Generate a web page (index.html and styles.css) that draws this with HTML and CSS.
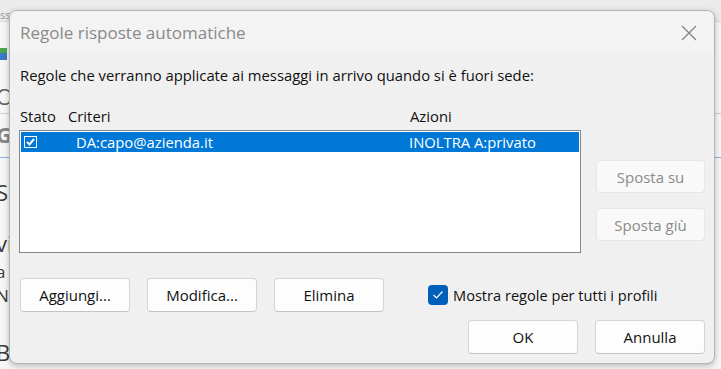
FILE: index.html
```html
<!DOCTYPE html>
<html lang="it">

<head>
    <meta charset="UTF-8">
    <title>Regole risposte automatiche</title>
    <link rel="stylesheet" href="styles.css">
</head>

<body>

    <div class="sfondo">
        <div class="sfondo-top">ss</div>
        <div class="sfondo-icona"></div>
        <div class="sfondo-riga r-o">O</div>
        <div class="sfondo-riga r-g">G</div>
        <div class="sfondo-linea"></div>
        <div class="sfondo-riga r-se">Se</div>
        <div class="sfondo-riga r-vi">vi</div>
        <div class="sfondo-riga r-a">a</div>
        <div class="sfondo-riga r-n">N</div>
        <div class="sfondo-riga r-b">B</div>
    </div>

    <div class="finestra">
        <div class="barra-titolo">
            <span class="titolo">Regole risposte automatiche</span>
            <svg class="chiudi" width="16" height="16" viewBox="0 0 16 16">
                <path d="M1 1 L15 15 M15 1 L1 15" stroke="#808080" stroke-width="1.2" fill="none" />
            </svg>
        </div>

        <div class="contenuto">
            <p class="intro">Regole che verranno applicate ai messaggi in arrivo quando si è fuori sede:</p>

            <div class="principale">
                <div class="regole">
                    <div class="intestazioni">
                        <span class="col-stato">Stato</span>
                        <span class="col-criteri">Criteri</span>
                        <span class="col-azioni">Azioni</span>
                    </div>
                    <div class="lista">
                        <div class="riga selezionata">
                            <span class="col-stato"><span class="spunta-classica">
                                <svg width="9" height="8" viewBox="0 0 9 8">
                                    <path d="M1 4 L3.5 6.5 L8 1" stroke="#fff" stroke-width="2" fill="none" />
                                </svg>
                            </span></span>
                            <span class="col-criteri">DA:capo@azienda.it</span>
                            <span class="col-azioni">INOLTRA A:privato</span>
                        </div>
                    </div>
                </div>

                <div class="laterale">
                    <button class="pulsante" disabled>Sposta su</button>
                    <button class="pulsante" disabled>Sposta giù</button>
                </div>
            </div>

            <div class="azioni">
                <button class="pulsante">Aggiungi...</button>
                <button class="pulsante">Modifica...</button>
                <button class="pulsante">Elimina</button>
                <label class="opzione">
                    <span class="casella">
                        <svg width="12" height="10" viewBox="0 0 12 10">
                            <path d="M1.5 5 L4.5 8 L10.5 1.5" stroke="#fff" stroke-width="1.2" fill="none" />
                        </svg>
                    </span>
                    Mostra regole per tutti i profili
                </label>
            </div>

            <div class="piede">
                <button class="pulsante">OK</button>
                <button class="pulsante">Annulla</button>
            </div>
        </div>
    </div>

</body>

</html>
```

FILE: styles.css
```css
html {
    background-color: #ececec;
}

body {
    margin: 0;
    width: 721px;
    height: 369px;
    position: relative;
    overflow: hidden;
    font-family: 'Open Sans', 'Noto Sans', sans-serif;
}

/* finestra di Outlook dietro al dialogo */
.sfondo {
    display: flex;
    flex-direction: column;
    height: 100%;
    background-color: #f7f7f7;
    color: #3a3a3a;
    font-size: 22px;
}

.sfondo-top {
    height: 22px;
    font-size: 11px;
    line-height: 14px;
    color: #999;
    background-color: #ebebeb;
    border-bottom: 1px solid #ddd;
    padding-top: 8px;
    box-sizing: border-box;
}

.sfondo-icona {
    margin-top: 26px;
    width: 7px;
    height: 12px;
    background: linear-gradient(#4aa64a 0 40%, #3c78c8 40%);
}

.sfondo-riga {
    text-indent: -4px;
}

.r-o {
    margin-top: 19px;
    height: 34px;
    line-height: 34px;
    border-bottom: 1px solid #cfcfcf;
    color: #666;
}

.r-g {
    height: 40px;
    line-height: 40px;
    color: #888;
    font-weight: bold;
}

.sfondo-linea {
    height: 1px;
    margin-top: 3px;
    background-color: #8ab4e8;
}

.r-se {
    height: 68px;
    line-height: 68px;
}

.r-vi {
    height: 34px;
    line-height: 34px;
}

.r-a {
    height: 24px;
    line-height: 24px;
    font-size: 17px;
}

.r-n {
    height: 24px;
    line-height: 24px;
    font-size: 17px;
}

.r-b {
    margin-top: 29px;
    height: 30px;
    line-height: 30px;
}

/* dialogo */
.finestra {
    position: absolute;
    left: 9px;
    top: 10px;
    width: 706px;
    height: 354px;
    box-sizing: border-box;
    background-color: #f0f0f0;
    border: 1px solid #b4b4b4;
    border-radius: 8px;
    box-shadow: 0 2px 6px rgba(0, 0, 0, 0.25);
    overflow: hidden;
    color: #111;
    font-size: 14.8px;
}

.barra-titolo {
    height: 43px;
    display: flex;
    align-items: center;
    justify-content: space-between;
    padding: 0 17px 0 10px;
    background-color: #f3f3f3;
}

.titolo {
    font-size: 17px;
    color: #8a8a8a;
}

.contenuto {
    padding: 0 9px 0 9px;
}

.intro {
    margin: 11px 0 0 1px;
    line-height: 20px;
}

.principale {
    display: flex;
    gap: 15px;
    margin-top: 21px;
}

.regole {
    width: 563px;
}

.intestazioni {
    display: flex;
    line-height: 20px;
    padding-left: 1px;
}

.col-stato {
    width: 48px;
}

.col-criteri {
    width: 342px;
}

.lista {
    margin-top: 4px;
    height: 123px;
    box-sizing: border-box;
    border: 1px solid #828790;
    background-color: #fff;
    padding: 1px;
}

.riga {
    display: flex;
    align-items: center;
    height: 20px;
}

.riga.selezionata {
    background-color: #0078d7;
    color: #fff;
}

.riga .col-stato {
    padding-left: 3px;
    width: 55px;
    box-sizing: border-box;
}

.riga .col-criteri {
    width: 333px;
}

.spunta-classica {
    display: flex;
    align-items: center;
    justify-content: center;
    width: 13px;
    height: 12px;
    box-sizing: border-box;
    border: 1px solid #fff;
}

.laterale {
    display: flex;
    flex-direction: column;
    gap: 15px;
    padding-top: 54px;
}

.pulsante {
    width: 110px;
    height: 34px;
    font-family: inherit;
    font-size: 15px;
    color: #111;
    background-color: #fdfdfd;
    border: 1px solid #d5d5d5;
    border-bottom-color: #c4c4c4;
    border-radius: 4px;
    padding: 0;
}

.laterale .pulsante {
    width: 109px;
    height: 33px;
}

.pulsante:disabled {
    background-color: #f9f9f9;
    border-color: #e6e6e6;
    color: #8a8a8a;
}

.azioni {
    display: flex;
    align-items: center;
    gap: 17px;
    margin-top: 25px;
    padding-left: 1px;
}

.opzione {
    display: flex;
    align-items: center;
    gap: 5px;
    margin-left: 27px;
    font-size: 14.6px;
}

.casella {
    display: flex;
    align-items: center;
    justify-content: center;
    width: 20px;
    height: 20px;
    background-color: #005fb8;
    border-radius: 4px;
}

.piede {
    display: flex;
    justify-content: flex-end;
    gap: 17px;
    margin-top: 8px;
}
```
